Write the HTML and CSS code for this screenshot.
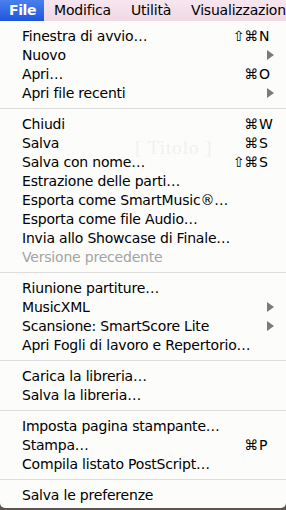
FILE: index.html
```html
<!DOCTYPE html>
<html lang="it">
<head>
<meta charset="utf-8">
<title>File menu</title>
<link rel="stylesheet" href="styles.css">
</head>
<body>
<div class="screen">
  <div class="menubar">
    <span class="mb-item active">File</span>
    <span class="mb-item">Modifica</span>
    <span class="mb-item">Utilità</span>
    <span class="mb-item">Visualizzazione</span>
  </div>
  <div class="menu">
    <div class="ghost">[ Titolo ]</div>
    <div class="item"><span class="label">Finestra di avvio…</span><span class="sc"><span class="mods">⇧⌘</span><span class="key">N</span></span></div>
    <div class="item"><span class="label">Nuovo</span><span class="sc"><span class="arrow"></span></span></div>
    <div class="item"><span class="label">Apri…</span><span class="sc"><span class="mods">⌘</span><span class="key">O</span></span></div>
    <div class="item"><span class="label">Apri file recenti</span><span class="sc"><span class="arrow"></span></span></div>
    <div class="sep"></div>
    <div class="item"><span class="label">Chiudi</span><span class="sc"><span class="mods">⌘</span><span class="key">W</span></span></div>
    <div class="item"><span class="label">Salva</span><span class="sc"><span class="mods">⌘</span><span class="key">S</span></span></div>
    <div class="item"><span class="label">Salva con nome…</span><span class="sc"><span class="mods">⇧⌘</span><span class="key">S</span></span></div>
    <div class="item"><span class="label">Estrazione delle parti…</span></div>
    <div class="item"><span class="label">Esporta come SmartMusic®…</span></div>
    <div class="item"><span class="label">Esporta come file Audio…</span></div>
    <div class="item"><span class="label">Invia allo Showcase di Finale…</span></div>
    <div class="item disabled"><span class="label">Versione precedente</span></div>
    <div class="sep"></div>
    <div class="item"><span class="label">Riunione partiture…</span></div>
    <div class="item"><span class="label">MusicXML</span><span class="sc"><span class="arrow"></span></span></div>
    <div class="item"><span class="label">Scansione: SmartScore Lite</span><span class="sc"><span class="arrow"></span></span></div>
    <div class="item"><span class="label">Apri Fogli di lavoro e Repertorio…</span></div>
    <div class="sep"></div>
    <div class="item"><span class="label">Carica la libreria…</span></div>
    <div class="item"><span class="label">Salva la libreria…</span></div>
    <div class="sep"></div>
    <div class="item"><span class="label">Imposta pagina stampante…</span></div>
    <div class="item"><span class="label">Stampa…</span><span class="sc"><span class="mods">⌘</span><span class="key">P</span></span></div>
    <div class="item"><span class="label">Compila listato PostScript…</span></div>
    <div class="sep"></div>
    <div class="item"><span class="label">Salva le preferenze</span></div>
  </div>
</div>
</body>
</html>
```
FILE: styles.css
```css
html, body {
  margin: 0;
  padding: 0;
}
body {
  width: 286px;
  height: 510px;
  overflow: hidden;
  background: #5a5550;
  font-family: "DejaVu Sans", sans-serif;
  font-size: 14px;
  letter-spacing: -0.2px;
  color: #000;
}
.screen {
  display: flex;
  flex-direction: column;
  width: 286px;
  height: 510px;
}
.menubar {
  display: flex;
  height: 21px;
  align-items: stretch;
  background: linear-gradient(#f7e6ef, #efd9e5);
  white-space: nowrap;
  overflow: hidden;
}
.mb-item {
  display: flex;
  align-items: center;
  padding: 0 10px;
  line-height: 21px;
}
.mb-item.active {
  padding: 0 8px 0 9px;
  background: linear-gradient(#4b7ff0, #1f55dc);
  color: #fff;
  font-weight: bold;
  letter-spacing: -0.4px;
}
.menu {
  position: relative;
  background: #fcfcfb;
  padding: 5px 0 4px;
  height: 487px;
  box-sizing: border-box;
  border-radius: 0 0 5px 5px;
}
.ghost {
  position: absolute;
  left: 135px;
  top: 116px;
  font-family: "Liberation Serif", serif;
  font-size: 19px;
  color: #f1f1f1;
  letter-spacing: 1px;
}
.item {
  position: relative;
  display: flex;
  justify-content: space-between;
  align-items: center;
  height: 19px;
  padding-left: 22px;
  padding-right: 10px;
  white-space: nowrap;
}
.item.disabled {
  color: #a3a3a3;
}
.sc {
  display: flex;
  align-items: center;
}
.mods {
  text-align: right;
  padding-right: 1px;
}
.key {
  width: 17px;
  text-align: left;
}
.arrow {
  width: 0;
  height: 0;
  margin-right: 2px;
  border-top: 5px solid transparent;
  border-bottom: 5px solid transparent;
  border-left: 7px solid #7a7a7a;
}
.sep {
  height: 12px;
  display: flex;
  align-items: center;
}
.sep::before {
  content: "";
  flex: 1;
  height: 1px;
  background: #dedede;
}
```
